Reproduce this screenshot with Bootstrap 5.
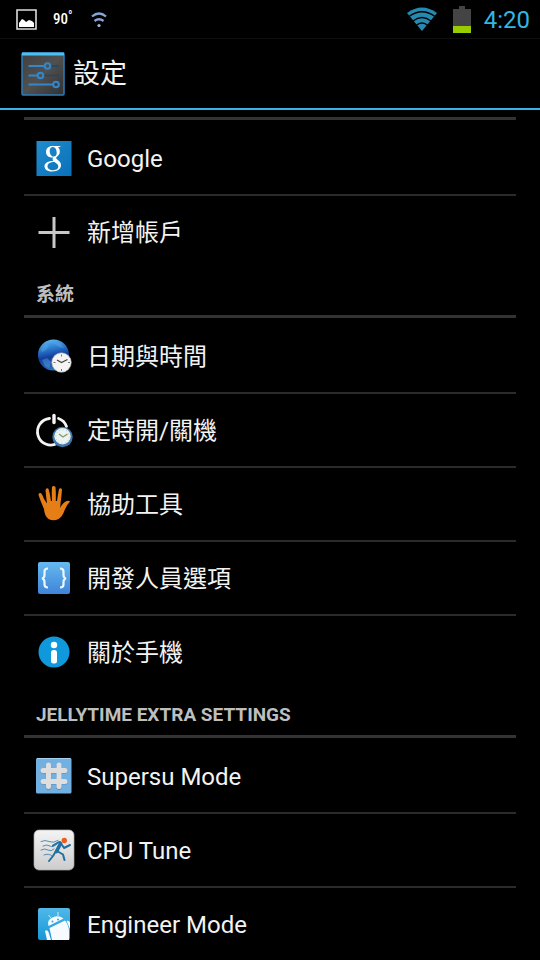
<!DOCTYPE html>
<html lang="zh-Hant">
<head>
<meta charset="utf-8">
<meta name="viewport" content="width=device-width, initial-scale=1">
<title>設定</title>
<link href="https://cdn.jsdelivr.net/npm/bootstrap@5.3.0/dist/css/bootstrap.min.css" rel="stylesheet">
<style>
  body { background: #000; color: #f3f3f3; font-family: Roboto, "Noto Sans CJK TC", sans-serif; }
  svg { display: block; flex: none; }
  .status-bar { height: 39px; padding: 0 10px 0 16px; border-bottom: 1px solid #101010; }
  .status-temp { width: 20px; font: 500 15px/20px "Roboto Condensed", Roboto, sans-serif; color: #fff; margin: 0 17px 0 16px; white-space: nowrap; }
  .status-temp sup { font-size: 12px; top: -4px; line-height: 0; vertical-align: baseline; }
  .status-clock { font-size: 24px; line-height: 38px; color: #33b5e5; margin-left: 13px; padding-top: 2px; }
  .title-bar { height: 71px; padding: 0 20px; border-bottom: 2px solid #33b5e5; }
  .title-bar h1 { font-size: 27px; line-height: 40px; font-weight: 400; margin-left: 7px; }
  .settings { padding: 7px 24px 0; }
  .settings .list-group { --bs-list-group-bg: transparent; border-radius: 0; }
  .settings .list-group-item { height: 74px; padding: 3px 8px 0; border: 0; color: #f3f3f3; font-size: 24px; line-height: 36px; }
  .settings .list-group-item + .list-group-item { box-shadow: inset 0 2px #2b2b2b; }
  .row-icon { width: 44px; margin-right: 11px; }
  .section-rule { border-top: 3px solid #333; }
  .section-title { height: 50px; padding: 5px 12px 0; margin: 0; border-bottom: 3px solid #333; color: #bebebe; font-size: 19px; line-height: 44px; font-weight: 700; }
</style>
</head>
<body>
<header>
  <div class="status-bar d-flex align-items-center">
    <svg width="21" height="21" viewBox="0 0 21 21" aria-hidden="true"><path d="M1 1h19v19H1z" fill="none" stroke="#ddd" stroke-width="1.6"/><path d="M3 18v-4l3-4 2 1 2 2 3-2 3 1 2 2v4z" fill="#fff"/></svg>
    <span class="status-temp">90<sup>°</sup></span>
    <svg width="18" height="20" viewBox="0 0 18 20" aria-hidden="true" fill="none" stroke="#87a5d6" stroke-width="2.300"><path d="M2 7.500q7-6 14 0M4.500 12q4.500-3.500 9 0"/><circle cx="9" cy="16.500" r="1.600" fill="#9dbbe8" stroke="none"/></svg>
    <svg class="ms-auto" width="30" height="24" viewBox="0 0 30 24" aria-hidden="true"><path d="M0 6Q15-5 30 6L15 24z" fill="#268ab0"/><path d="M2 9.500Q15 0 28 9.500M6 14Q15 7 24 14M9 18.500Q15 13.500 21 18.500" fill="none" stroke="#000" stroke-width="1.500"/></svg>
    <svg class="ms-3" width="18" height="27" viewBox="0 0 18 27" aria-hidden="true"><path d="M6 0h6v3h6v24H0V3h6z" fill="#444"/><path d="M0 20h18v7H0z" fill="#99cc00"/></svg>
    <span class="status-clock">4:20</span>
  </div>
  <div class="title-bar d-flex align-items-center">
    <svg width="46" height="46" viewBox="0 0 46 46" aria-hidden="true">
      <defs><linearGradient id="panel" x1="0" y1="0" x2="1" y2="1"><stop stop-color="#404040"/><stop offset=".5" stop-color="#505050"/><stop offset="1" stop-color="#303030"/></linearGradient></defs>
      <rect x="2" y="2" width="42" height="42" rx="1" fill="url(#panel)" stroke="#2b7db9" stroke-width="1.500"/><path d="M2 1.500h42v3H2z" fill="#4cc0f2"/>
      <g fill="none" stroke="#3487c8" stroke-width="2"><path d="M8.500 15h16M8.500 24.500h9M8.500 33.500h25"/><path d="M31 15h8M24 24.500h15" stroke="#24465f" stroke-width="1.400"/><circle cx="27.500" cy="15" r="2.800"/><circle cx="20.500" cy="24.500" r="2.800"/><circle cx="36" cy="33.500" r="2.800"/></g>
    </svg>
    <h1 class="mb-0">設定</h1>
  </div>
</header>
<main class="settings">
  <div class="section-rule"></div>
  <div class="list-group">
    <a href="#" class="list-group-item d-flex align-items-center"><span class="row-icon">
      <svg width="44" height="44" viewBox="0 0 44 44" aria-hidden="true"><defs><linearGradient id="gbg" x1="0" y1="0" x2="1" y2="1"><stop stop-color="#218cce"/><stop offset="1" stop-color="#0870b8"/></linearGradient></defs><rect x="4.500" y="4" width="35" height="35" fill="url(#gbg)"/><g fill="#fff" fill-rule="evenodd"><path d="M29 9h-8.500c-4 0-6.500 2.500-6.500 6 0 3.300 2.500 5.500 6 5.500h1c-.8 1.500-.3 2.500.5 3.300-5 .2-9 2-9 5.600 0 3 3.200 5 7.800 5 5.200 0 8.700-2.700 8.700-6.200 0-2.400-1.200-3.800-3.400-5.400-1.900-1.400-1.900-2.100-.3-3.500 1.800-1.500 2.500-2.800 2.500-4.800 0-1.800-.6-3.200-1.900-4.400h1.500zM21 10c2.200 0 3.700 2.800 3.700 5.700 0 2.500-1 3.800-3 3.800-2.400 0-4-2.700-4-5.600 0-2.400 1.300-3.900 3.300-3.900zM22.500 25c2.700 1.700 3.800 2.700 3.800 4.600 0 2.200-1.800 3.600-5 3.600-3.500 0-5.800-1.600-5.800-4 0-2.600 2.600-4.200 7-4.200z"/></g></svg></span>Google</a>
    <a href="#" class="list-group-item d-flex align-items-center"><span class="row-icon">
      <svg width="44" height="44" viewBox="0 0 44 44" aria-hidden="true"><path d="M22 6v31M6.500 21.500h31" stroke="#c8c8c8" stroke-width="3"/></svg></span>新增帳戶</a>
  </div>
  <h2 class="section-title">系統</h2>
  <div class="list-group">
    <a href="#" class="list-group-item d-flex align-items-center"><span class="row-icon">
      <svg width="44" height="44" viewBox="0 0 44 44" aria-hidden="true"><defs><linearGradient id="globe" x1=".4" y1="0" x2=".6" y2="1"><stop stop-color="#5ab5f0"/><stop offset=".3" stop-color="#2877cc"/><stop offset=".55" stop-color="#123c9c"/><stop offset="1" stop-color="#287ac8"/></linearGradient></defs><circle cx="21.500" cy="20" r="15.500" fill="url(#globe)"/><path d="M9 14l5-5 3 2-3 4-4 2zM20 7l8 1 4 5-5-1-3-2zM10 25l5-2 4 4-2 6-4-2z" fill="#65aadf" opacity=".4"/><circle cx="29.500" cy="27.500" r="9.800" fill="#f4f4f4" stroke="#999" stroke-width=".6"/><path d="M25 25l4.500 2.500 6-3" fill="none" stroke="#444" stroke-width="1.200"/><path d="M29.500 19.500v2M29.500 34v2M21.500 27.500h2M36 27.500h2" stroke="#777"/></svg></span>日期與時間</a>
    <a href="#" class="list-group-item d-flex align-items-center"><span class="row-icon">
      <svg width="44" height="44" viewBox="0 0 44 44" aria-hidden="true"><g fill="none" stroke="#f4f4f4" stroke-linecap="round"><path d="M17.500 9.500a13.300 13.300 0 1 0 7.500 25M26.500 9.500a13 13 0 0 1 8 8" stroke-width="2.800"/><path d="M22 6.500v7" stroke-width="3.400"/></g><circle cx="30.500" cy="28" r="10.200" fill="#3c78ae"/><circle cx="30.500" cy="27.300" r="8.200" fill="#edf3ef"/><path d="M27 25l4 3 4.500-3" fill="none" stroke="#829a76" stroke-width="1.400"/><circle cx="30.500" cy="27.500" r="6.800" fill="none" stroke="#abc" stroke-width=".8" stroke-dasharray="1 2.560"/></svg></span>定時開/關機</a>
    <a href="#" class="list-group-item d-flex align-items-center"><span class="row-icon">
      <svg width="44" height="44" viewBox="0 0 44 44" aria-hidden="true"><path d="M12 26Q8.500 18 6.500 12q0-2.500 2-2 1.500.5 3.500 6l3 4.500Q14 13 13.500 7q.5-2.500 2.800-1.500Q17.500 8 19 18h1Q19.500 10 20 4q1.500-2 3.500 0 .5 6 .3 14h1.200Q26 11 27 6q2-1.500 3 .5-.5 7-1.500 14l-.3 4.500q2.500-5.500 6.500-7 3.500-.8 3 1-3 2.500-5.200 8.500-2 6-6 8.500-5 2.500-10 0-4-3-4.500-10z" fill="#e67e17"/></svg></span>協助工具</a>
    <a href="#" class="list-group-item d-flex align-items-center"><span class="row-icon">
      <svg width="44" height="44" viewBox="0 0 44 44" aria-hidden="true"><defs><linearGradient id="dev" x2="0" y2="1"><stop stop-color="#65b9ef"/><stop offset="1" stop-color="#3f84d9"/></linearGradient></defs><rect x="6" y="5" width="32" height="32" rx="2" fill="url(#dev)"/><path d="M16 11.500q-3.500 0-3.500 3v3.500q0 3-2.500 3.500 2.500.5 2.500 3.500v2.500q0 3 3.500 3M28 11.500q3.500 0 3.500 3v3.500q0 3 2.500 3.500-2.500.5-2.500 3.500v2.500q0 3-3.500 3" fill="none" stroke="#eef7ff" stroke-width="2.200"/></svg></span>開發人員選項</a>
    <a href="#" class="list-group-item d-flex align-items-center"><span class="row-icon">
      <svg width="44" height="44" viewBox="0 0 44 44" aria-hidden="true"><circle cx="22" cy="21" r="15.500" fill="#1098dc"/><circle cx="22" cy="14" r="3.200" fill="#fff"/><rect x="19" y="19" width="6" height="13.500" rx="2.500" fill="#fff"/></svg></span>關於手機</a>
  </div>
  <h2 class="section-title">JELLYTIME EXTRA SETTINGS</h2>
  <div class="list-group">
    <a href="#" class="list-group-item d-flex align-items-center"><span class="row-icon">
      <svg width="44" height="44" viewBox="0 0 44 44" aria-hidden="true"><rect x="4" y="3" width="35.500" height="35.500" rx="1.500" fill="#73b0e2"/><path d="M5 3.500h33.500" stroke="#a5d2ef"/><path d="M16.500 11v21.500M27 11v21.500M11 16h22M11 27h22" stroke="#446" stroke-opacity=".25" stroke-width="5.500" stroke-linecap="round"/><path d="M16.500 10v21.500M27 10v21.500M11 15.500h22M11 26.500h22" stroke="#dedede" stroke-width="5" stroke-linecap="round"/></svg></span>Supersu Mode</a>
    <a href="#" class="list-group-item d-flex align-items-center"><span class="row-icon">
      <svg width="44" height="44" viewBox="0 0 44 44" aria-hidden="true"><defs><linearGradient id="cpu" x2="0" y2="1"><stop stop-color="#f4f4f4"/><stop offset="1" stop-color="#ccc"/></linearGradient></defs><rect x="2" y="1" width="40" height="40" rx="5" fill="url(#cpu)" stroke="#aaa" stroke-width=".7"/><g fill="none" stroke="#236f9f" stroke-linecap="round" stroke-linejoin="round"><path d="M9 12.500q4-2 8 0t9-1M11 17q4-2 7 0t7-2M9 21q4-2 7 0t6-1M12 26q5-2 8 1" stroke-width="1" opacity=".75"/><path d="M28.500 14.500l-4 8" stroke-width="3.600"/><path d="M28 13l4 6 6-3M27 13l-6 3.500M25 22l6 3.500 1.500 5.500M24 22l-3 5-4 5" stroke-width="2"/></g><circle cx="32.300" cy="11.500" r="2.700" fill="#f35b1b"/></svg></span>CPU Tune</a>
    <a href="#" class="list-group-item d-flex align-items-center"><span class="row-icon">
      <svg width="44" height="44" viewBox="0 0 44 44" aria-hidden="true"><defs><linearGradient id="eng" x2="0" y2="1"><stop stop-color="#51b8e8"/><stop offset="1" stop-color="#1599d8"/></linearGradient></defs><rect x="6" y="5" width="32" height="32" rx="2" fill="url(#eng)"/><g fill="#f7fbff"><path d="M16.500 23q-2-6 4-8.500 6-3 11 1zM17.500 25l15.500-7.500q4 5 4 11V37H20z"/><path d="M13 28q2-2 3.500 1l2.500 8h-4zM34.500 18q3-1 3.500 2v6z"/></g><path d="M19 15l-2.500-3M26 13v-4" stroke="#cce9f7" stroke-width="1"/><circle cx="20.500" cy="18.500" r="1" fill="#36a9de"/><circle cx="26" cy="16.500" r="1" fill="#36a9de"/></svg></span>Engineer Mode</a>
  </div>
</main>
<script src="https://cdn.jsdelivr.net/npm/bootstrap@5.3.0/dist/js/bootstrap.bundle.min.js"></script>
</body>
</html>
